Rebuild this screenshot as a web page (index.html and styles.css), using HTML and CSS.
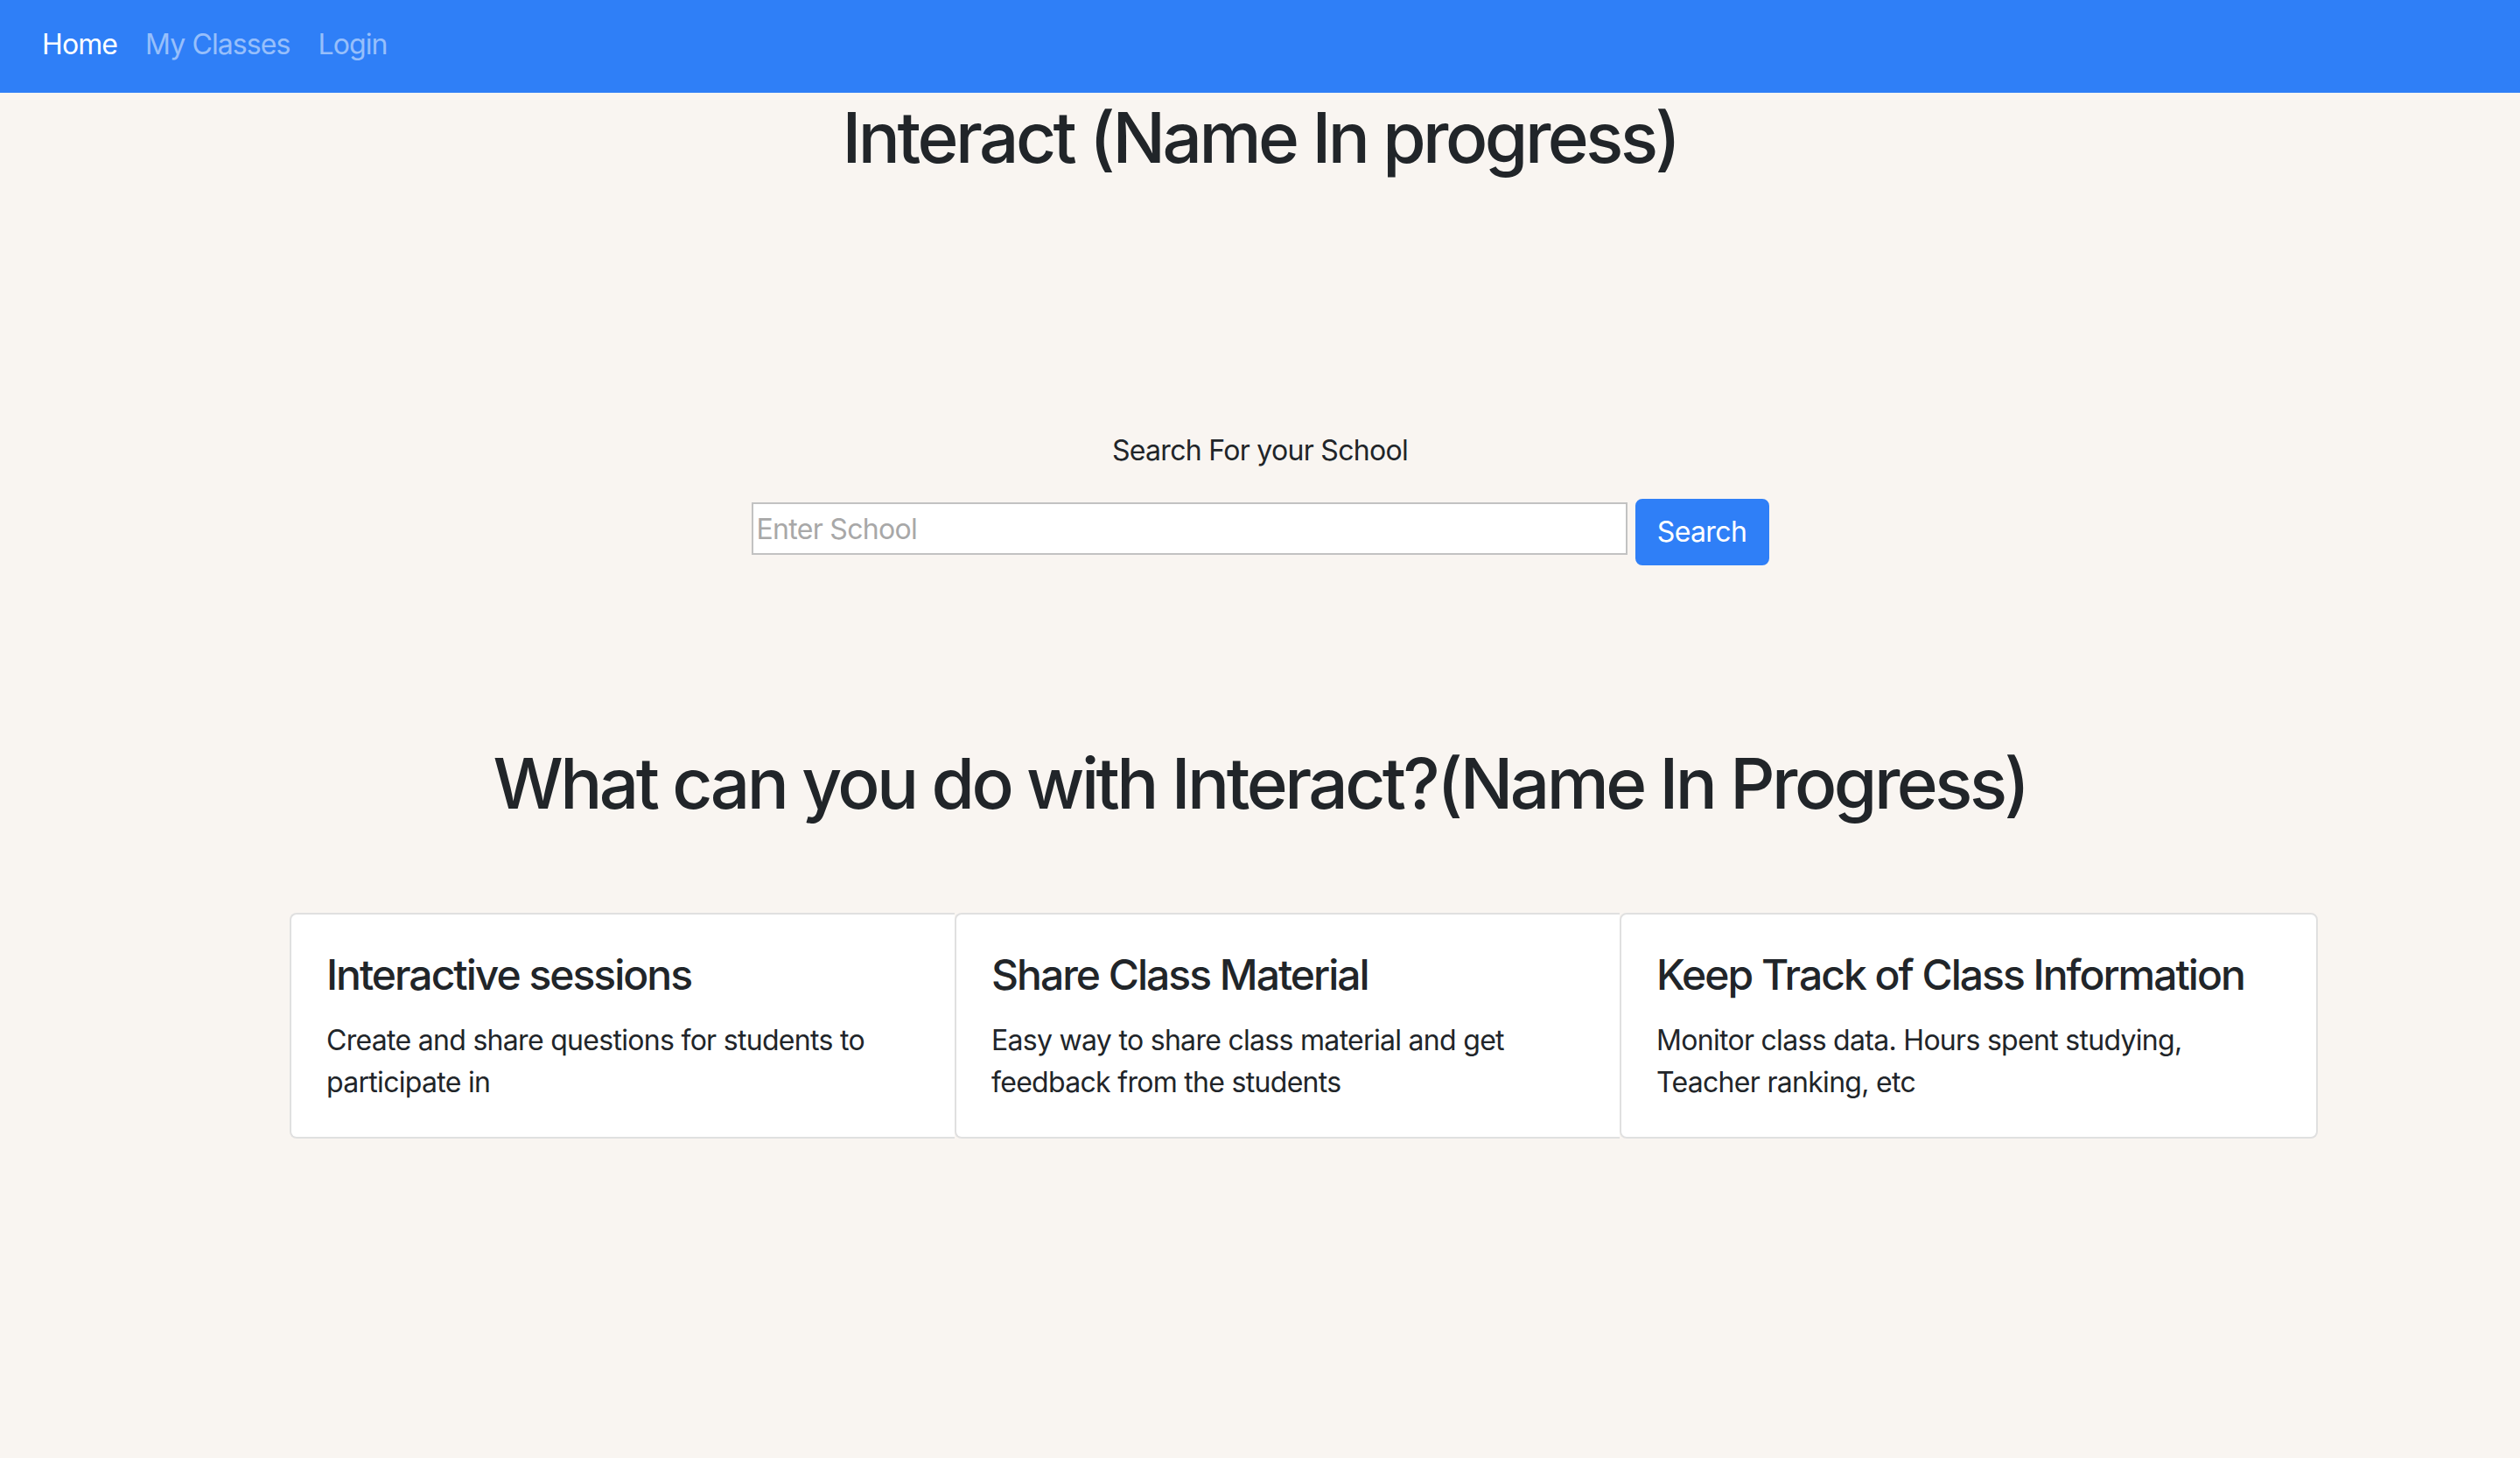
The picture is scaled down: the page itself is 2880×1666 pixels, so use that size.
FILE: index.html
```html
<!DOCTYPE html>
<html lang="en">
<head>
<meta charset="utf-8">
<title>Interact</title>
<link rel="stylesheet" href="styles.css">
</head>
<body>
<nav class="navbar">
  <a class="nav-link active" href="#">Home</a>
  <a class="nav-link" href="#">My Classes</a>
  <a class="nav-link" href="#">Login</a>
</nav>
<main class="page">
  <h1 class="title main-title">Interact (Name In progress)</h1>
  <p class="search-label">Search For your School</p>
  <form class="search-form">
    <input class="search-input" type="text" placeholder="Enter School">
    <button class="search-btn" type="button">Search</button>
  </form>
  <h1 class="title features-title">What can you do with Interact?(Name In Progress)</h1>
  <div class="container">
    <div class="card-group">
      <div class="card">
        <h4 class="card-title">Interactive sessions</h4>
        <p class="card-text">Create and share questions for students to participate in</p>
      </div>
      <div class="card">
        <h4 class="card-title">Share Class Material</h4>
        <p class="card-text">Easy way to share class material and get feedback from the students</p>
      </div>
      <div class="card">
        <h4 class="card-title">Keep Track of Class Information</h4>
        <p class="card-text">Monitor class data. Hours spent studying, Teacher ranking, etc</p>
      </div>
    </div>
  </div>
</main>
</body>
</html>
```
FILE: styles.css
```css
html, body {
  margin: 0;
  padding: 0;
}
body {
  background: #f9f5f1;
  color: #212529;
  font-family: "Inter", "Liberation Sans", sans-serif;
  font-size: 32px;
  line-height: 1.5;
  min-height: 1666px;
}
.navbar {
  display: flex;
  align-items: center;
  height: 106px;
  padding: 0 32px 4px;
  background: #2f7ff7;
  box-sizing: border-box;
}
.nav-link {
  padding: 0 16px;
  font-size: 32px;
  line-height: 48px;
  color: rgba(255, 255, 255, 0.5);
  text-decoration: none;
  letter-spacing: -0.9px;
}
.nav-link.active {
  color: #ffffff;
}
.page {
  display: flex;
  flex-direction: column;
  align-items: center;
}
.title {
  margin: 0;
  font-size: 80px;
  line-height: 96px;
  font-weight: 500;
  letter-spacing: -3.5px;
  text-align: center;
}
.main-title {
  margin-top: 3px;
}
.search-label {
  margin: 286px 0 0;
  font-size: 32px;
  line-height: 48px;
  letter-spacing: -0.7px;
}
.search-form {
  display: flex;
  align-items: flex-start;
  gap: 9px;
  margin-top: 31px;
}
.search-input {
  box-sizing: border-box;
  width: 1001px;
  height: 60px;
  margin-top: 4px;
  padding: 0 4px;
  border: 2px solid #c2c2c2;
  background: #ffffff;
  font-family: inherit;
  font-size: 32px;
  color: #212529;
  letter-spacing: -0.7px;
  outline: none;
}
.search-input::placeholder {
  color: #a8a8a8;
}
.search-btn {
  box-sizing: border-box;
  width: 153px;
  height: 76px;
  padding: 0;
  border: 2px solid #2f7ff7;
  border-radius: 8px;
  background: #2f7ff7;
  color: #ffffff;
  font-family: inherit;
  font-size: 32px;
  line-height: 48px;
  letter-spacing: -0.6px;
}
.features-title {
  margin-top: 201px;
}
.container {
  align-self: stretch;
  margin-top: 100px;
  padding-left: 331px;
}
.card-group {
  display: grid;
  grid-template-columns: 760px 760px 798px;
}
.card {
  box-sizing: border-box;
  padding: 40px 40px 38px;
  background: #ffffff;
  border: 2px solid #e0e0e0;
  border-right: 0;
  border-radius: 0;
}
.card:first-child {
  border-radius: 8px 0 0 8px;
}
.card:nth-child(2) {
  border-radius: 8px 0 0 8px;
}
.card:last-child {
  border-right: 2px solid #e0e0e0;
  border-radius: 8px;
}
.card-title {
  margin: 0 0 22px;
  font-size: 48px;
  line-height: 57.6px;
  font-weight: 500;
  letter-spacing: -2px;
}
.card-text {
  margin: 0;
  font-size: 32px;
  line-height: 48px;
  letter-spacing: -0.7px;
}
```
